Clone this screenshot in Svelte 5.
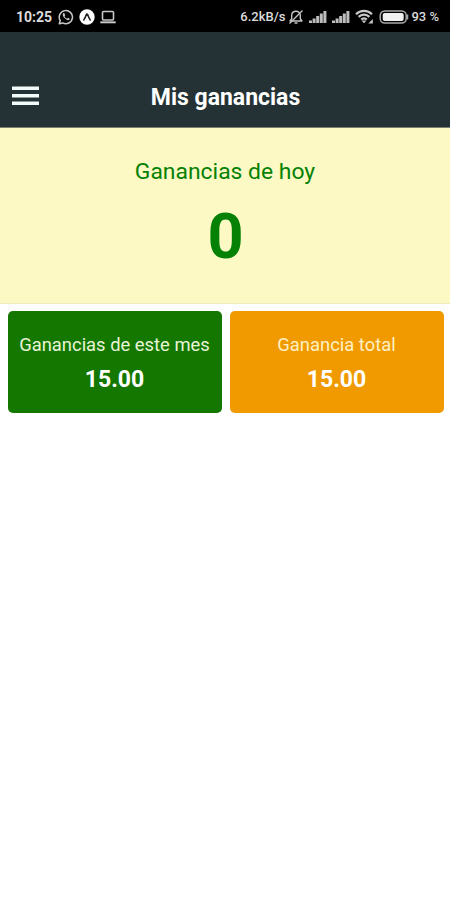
<script lang="ts">
  type Card = {
    id: string;
    label: string;
    amount: number;
  };

  const today = 0;

  const cards: Card[] = [
    { id: 'month', label: 'Ganancias de este mes', amount: 15 },
    { id: 'total', label: 'Ganancia total', amount: 15 },
  ];

  const signals = ['sim1', 'sim2'];
</script>

<div class="screen">
  <div class="status-bar">
    <div class="status-left">
      <span class="clock">10:25</span>
      <svg class="whatsapp" width="16" height="16" viewBox="0 0 16 16" fill="none">
        <path d="M1.3 14.8 2.2 11.5A6.6 6.6 0 1 1 4.7 13.9Z" stroke="#c8c8c8" stroke-width="1.5" stroke-linejoin="round" />
        <path d="M5.3 4.3C4.2 5.3 4.7 7.2 6.5 9.1s3.900 2.700 5 1.500c.5-.6.300-.9-.2-1.200l-1.300-.6-.9.9C7.900 9.300 7 8.400 6.500 7.200l.7-.8-.6-1.600c-.3-.7-.8-.9-1.300-.5Z" fill="#c8c8c8" />
      </svg>
      <svg width="16" height="16" viewBox="0 0 16 16">
        <circle cx="8" cy="8" r="7.7" fill="#fff" />
        <path d="M4.800 11C6 9.500 6.800 7.200 7.400 5.500c.3-.7.9-.7 1.200 0 .6 1.700 1.400 4 2.600 5.500" fill="none" stroke="#222" stroke-width="1.600" stroke-linecap="round" />
      </svg>
      <svg class="laptop" width="16" height="14" viewBox="0 0 16 14" fill="none" stroke="#c8c8c8">
        <rect x="2.500" y="1.500" width="11" height="8.500" rx="1" stroke-width="1.600" />
        <path d="M.3 12.300h15.400" stroke-width="2" />
      </svg>
    </div>

    <div class="status-right">
      <span class="speed">6.2kB/s</span>
      <svg class="muted" width="16" height="16" viewBox="0 0 16 16" fill="none" stroke="#c4c4c4" stroke-width="1.400">
        <path d="M2 12h12L12.300 9.800V6.500C12.300 4 10.500 2.300 8 2.300S3.700 4 3.700 6.500v3.300Z" stroke-linejoin="round" />
        <path d="M6.500 14h3M1.500 14.500 14.500 1.500" />
      </svg>
      {#each signals as sim (sim)}
        <svg class="signal" width="18" height="14" viewBox="0 0 18 14" fill="#bdbdbd">
          <rect x="0" y="10.500" width="3" height="2.500" />
          <rect x="3.600" y="8.500" width="3" height="4.500" />
          <rect x="7.200" y="6" width="3" height="7" />
          <rect x="10.800" y="3.500" width="3" height="9.500" />
          <rect x="14.400" y="1" width="3" height="12" />
        </svg>
      {/each}
      <svg class="wifi" width="18" height="15" viewBox="0 0 18 15" fill="none" stroke="#c8c8c8" stroke-width="2.200">
        <path d="M1 5.200C5.400.700 12.600.700 17 5.200M3.600 7.900c3-3 7.800-3 10.800 0M6.200 10.500c1.600-1.600 4-1.600 5.600 0" />
        <path d="m6.500 11.500 2.500 2.800 2.500-2.800Z" fill="#c8c8c8" stroke="none" />
        <path d="M17.800 10v4.500h-4.500Z" fill="#c8c8c8" stroke="none" />
      </svg>
      <svg class="battery" width="30" height="14" viewBox="0 0 30 14">
        <rect x="1.200" y=".9" width="26" height="12.200" rx="4.500" fill="none" stroke="#a8a8a8" stroke-width="1.500" />
        <rect x="3.700" y="3" width="21" height="8" rx="2" fill="#f0f0f0" />
        <path d="M28.500 4.500v5" stroke="#a8a8a8" stroke-width="1.500" />
      </svg>
      <span class="percent">93 %</span>
    </div>
  </div>

  <header class="app-bar">
    <button class="menu" aria-label="Menú">
      <svg width="27" height="20" viewBox="0 0 27 20" fill="#f2fafa">
        <rect y=".5" width="27" height="3.500" />
        <rect y="8" width="27" height="3.500" />
        <rect y="15.500" width="27" height="3.500" />
      </svg>
    </button>
    <h1>Mis ganancias</h1>
  </header>

  <section class="today">
    <p class="today-label">Ganancias de hoy</p>
    <p class="today-amount">{today}</p>
  </section>

  <section class="cards">
    {#each cards as card (card.id)}
      <div class="card {card.id}">
        <p class="card-label">{card.label}</p>
        <p class="card-amount">{card.amount.toFixed(2)}</p>
      </div>
    {/each}
  </section>
</div>

<style>
  :global(body) {
    margin: 0;
    background: #fff;
  }

  .screen {
    width: 100%;
    height: 100vh;
    overflow: hidden;
    background: #fff;
    font-family: Roboto, 'Liberation Sans', sans-serif;
  }

  p,
  h1 {
    margin: 0;
    white-space: nowrap;
  }

  .status-bar {
    display: flex;
    justify-content: space-between;
    box-sizing: border-box;
    height: 32px;
    padding: 1px 11px 0 16px;
    background: #000;
    color: #dcdcdc;
  }

  .status-left,
  .status-right {
    display: flex;
    align-items: center;
    white-space: nowrap;
  }

  .status-left {
    gap: 5px;
  }

  .clock {
    font-size: 14px;
    font-weight: 700;
    margin-right: 1px;
  }

  .speed,
  .percent {
    font-size: 13px;
    font-weight: 500;
  }

  .muted {
    margin: 0 5px 0 3px;
  }

  .signal {
    margin-right: 5px;
  }

  .battery {
    margin: 0 2px 0 6px;
  }

  .app-bar {
    display: grid;
    grid-template-columns: 50px 1fr 50px;
    align-items: center;
    box-sizing: border-box;
    height: 96px;
    padding-top: 36px;
    border-bottom: 1px solid #7d8070;
    background: #253235;
  }

  .menu {
    display: flex;
    width: 27px;
    margin: -3px 0 0 12px;
    padding: 0;
    border: 0;
    background: none;
  }

  h1 {
    color: #fff;
    font-size: 23px;
    font-weight: 700;
    line-height: 28px;
    text-align: center;
    padding-left: 1px;
  }

  .today {
    box-sizing: border-box;
    height: 176px;
    padding-top: 30px;
    border-bottom: 1px solid #eeebbf;
    background: #fdf9c4;
    color: #058205;
    text-align: center;
  }

  .today-label {
    font-size: 22.9px;
    line-height: 28px;
  }

  .today-amount {
    font-size: 63px;
    font-weight: 700;
    line-height: 76px;
    margin-top: 13px;
    padding-left: 1px;
  }

  .cards {
    display: grid;
    grid-template-columns: 1fr 1fr;
    gap: 8px;
    padding: 7px 6.5px 0 7.5px;
  }

  .card {
    box-sizing: border-box;
    height: 102px;
    padding-top: 22px;
    border-radius: 5px;
    color: #fff;
    text-align: center;
  }

  .month {
    background: #147800;
  }

  .total {
    background: #f09a00;
  }

  .card-label {
    color: #e9f3d6;
    font-size: 18.4px;
    line-height: 24px;
  }

  .total .card-label {
    color: #fff0c4;
  }

  .card-amount {
    margin-top: 9px;
    font-size: 23px;
    font-weight: 700;
    line-height: 28px;
  }
</style>
